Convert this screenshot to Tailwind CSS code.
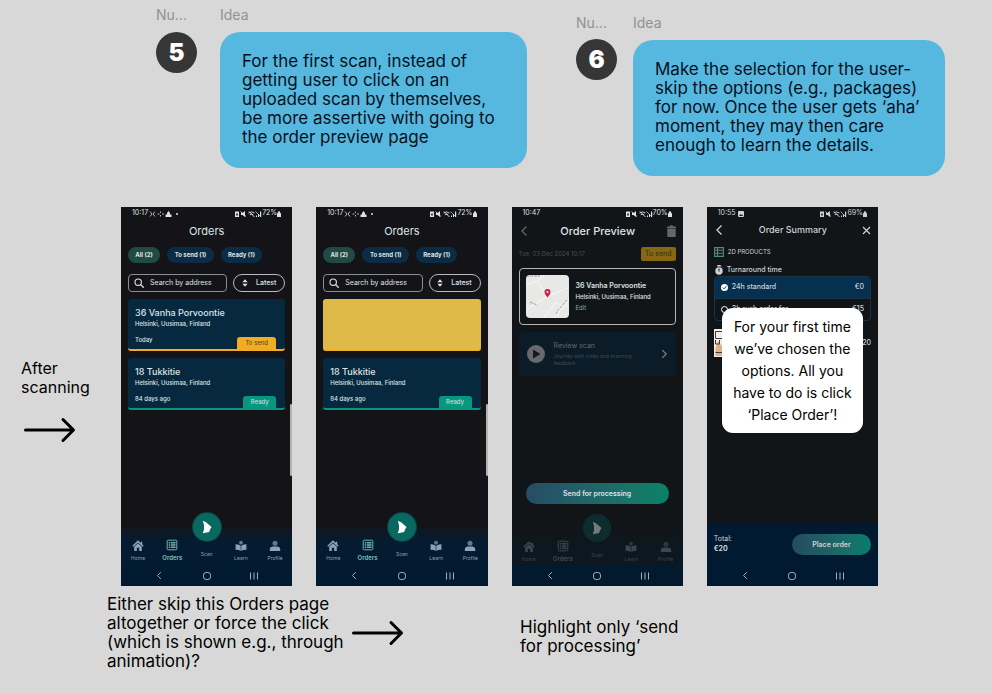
<!DOCTYPE html>
<html lang="en">
<head>
<meta charset="utf-8">
<title>Order flow ideas</title>
<meta name="viewport" content="width=device-width, initial-scale=1">
<script src="https://cdn.jsdelivr.net/npm/@tailwindcss/browser@4"></script>
</head>
<body class="min-h-screen bg-[#d8d8d8] font-['Inter','Liberation_Sans',sans-serif] text-black">

<!-- Shared icons -->
<svg class="hidden" aria-hidden="true">
  <symbol id="arrow" viewBox="0 0 52 26"><path d="M1.500 13H49M39 2.500L49.500 13L39 23.500" fill="none" stroke="currentColor" stroke-width="3" stroke-linecap="round" stroke-linejoin="round"/></symbol>
  <symbol id="st-left" viewBox="0 0 30 8"><path d="M1 1.500L3 4L1 6.500M6 1.500L4 4L6 6.500M8.500 4h2M13 4h2M11.500 1.500v1.500M11.500 5v1.500" fill="none" stroke="currentColor" stroke-width=".8"/><path d="M16.500 7V4.500H18V3L19.500 1L21 3v1.500h1.500V7z" fill="currentColor"/><circle cx="28" cy="4" r="1" fill="currentColor"/></symbol>
  <symbol id="st-right" viewBox="0 0 28 8"><path d="M1 1.500h4V7H1zM7 3h1.500L11 1v6L8.500 5H7z" fill="currentColor"/><path d="M2.200 3.500h1.600v2H2.200z" fill="#222"/><path d="M6.500 1.500L12 6.500M14.500 3q3-2.200 6 0M15.800 4.800q1.700-1.200 3.400 0M15 1.500L20.500 7" fill="none" stroke="currentColor" stroke-width=".9"/><path d="M22 7V5.500h1V7zM24 7V4h1v3zM26 7V1.500h1.200V7z" fill="currentColor"/><path d="M21.500 1.500L26 6" stroke="currentColor" stroke-width=".7"/></symbol>
  <symbol id="lock" viewBox="0 0 4 6"><path d="M0 2.300h4V6H0zM.8 2.500V1.500a1.200 1.200 0 0 1 2.400 0v1z" fill="currentColor"/></symbol>
  <symbol id="search" viewBox="0 0 10 10"><circle cx="4.200" cy="4.200" r="3.200" fill="none" stroke="currentColor" stroke-width="1.100"/><path d="M6.600 6.600L9.300 9.300" stroke="currentColor" stroke-width="1.300" stroke-linecap="round"/></symbol>
  <symbol id="sort" viewBox="0 0 6 8"><path d="M3 .3L5.600 3.300H.4zM3 7.700L5.600 4.700H.4z" fill="currentColor"/></symbol>
  <symbol id="home" viewBox="0 0 12 12"><path d="M.8 6.300L6 1.400L11.200 6.300M9.500 1.800v2.500" fill="none" stroke="currentColor" stroke-width="1.500"/><path d="M2.200 6.800L6 3.300L9.800 6.800V11H7.200V7.800H4.800V11H2.200z" fill="currentColor"/></symbol>
  <symbol id="orders" viewBox="0 0 12 12"><rect x="1.200" y="1.200" width="9.600" height="9.600" rx="1" fill="none" stroke="currentColor" stroke-width="1"/><path d="M2.800 3h1.500v1.500H2.800zM2.800 5.300h1.500v1.500H2.800zM2.800 7.600h1.500v1.500H2.800zM5 3h4.500v1.500H5zM5 5.300h4.500v1.500H5zM5 7.600h4.500v1.500H5z" fill="currentColor"/></symbol>
  <symbol id="learn" viewBox="0 0 12 12"><circle cx="6" cy="2.700" r="1.900" fill="currentColor" opacity=".7"/><path d="M.6 4.200Q4 4 5.700 5.800V11Q3.500 9.600.6 9.900zM11.400 4.200Q8 4 6.300 5.800V11Q8.500 9.600 11.400 9.900z" fill="currentColor"/></symbol>
  <symbol id="profile" viewBox="0 0 12 12"><circle cx="6" cy="3.200" r="2.500" fill="currentColor" opacity=".7"/><path d="M.8 11V9Q1 6.800 3.500 6.500H8.500Q11 6.800 11.200 9V11z" fill="currentColor"/></symbol>
  <symbol id="scan" viewBox="0 0 12 14"><path d="M1.800 .8L5 2.200L10.500 7L9 9.500L8.200 12L1.800 13.200L3 9.500V5z" fill="currentColor"/></symbol>
  <symbol id="back" viewBox="0 0 8 12"><path d="M6.500 1.500L2 6L6.500 10.500" fill="none" stroke="currentColor" stroke-width="1.300"/></symbol>
  <symbol id="circle" viewBox="0 0 10 10"><rect x="1.500" y="1.500" width="7" height="7" rx="2.600" fill="none" stroke="currentColor"/></symbol>
  <symbol id="bars" viewBox="0 0 10 10"><path d="M1.500 1.500v7M5 1.500v7M8.500 1.500v7" stroke="currentColor"/></symbol>
</svg>

<header class="flex items-start pl-[156px] pr-[47px]">
  <section class="flex flex-[371] gap-[23px] pt-[6px]">
    <div class="w-[41px] shrink-0">
      <p class="mb-[9px] text-[14px] leading-[17px] text-[#929292]">Nu...</p>
      <div class="grid size-[41px] place-items-center rounded-full bg-[#363636] text-[24px] leading-[24px] font-black text-white">5</div>
    </div>
    <div class="flex-1">
      <h2 class="mb-[9px] text-[14px] leading-[17px] text-[#929292]">Idea</h2>
      <p class="rounded-[20px] bg-[#56b8df] px-[22px] pt-[20px] pb-[21px] text-[17px] leading-[19px] text-[#03101c]">For the first scan, instead of<br>getting user to click on an<br>uploaded scan by themselves,<br>be more assertive with going to<br>the order preview page</p>
    </div>
  </section>
  <section class="ml-[49px] flex flex-[369] gap-[16px] pt-[14px]">
    <div class="w-[41px] shrink-0">
      <p class="mb-[8px] text-[14px] leading-[17px] text-[#929292]">Nu...</p>
      <div class="grid size-[41px] place-items-center rounded-full bg-[#363636] text-[24px] leading-[24px] font-black text-white">6</div>
    </div>
    <div class="flex-1">
      <h2 class="mb-[9px] text-[14px] leading-[17px] text-[#929292]">Idea</h2>
      <p class="rounded-[20px] bg-[#56b8df] px-[22px] pt-[20px] pb-[21px] text-[17px] leading-[19px] text-[#03101c]">Make the selection for the user-<br>skip the options (e.g., packages)<br>for now. Once the user gets ‘aha’<br>moment, they may then care<br>enough to learn the details.</p>
    </div>
  </section>
</header>

<main class="mt-[31px] flex pr-[114px]">
  <aside class="w-[121px] shrink-0 pt-[152px] pl-[21px]">
    <p class="text-[16px] leading-[19px]">After<br>scanning</p>
    <svg class="mt-[20px] ml-[3px] h-[26px] w-[52px]"><use href="#arrow"/></svg>
  </aside>

  <div class="grid flex-1 grid-cols-4 gap-6">

    <!-- Orders -->
    <article class="relative flex aspect-[171/378] flex-col bg-[#131318] text-[#dfe3e6]">
      <div class="flex h-[13px] items-center px-[11px] text-[7px]"><span>10:17</span><svg class="ml-[1px] h-[8px] w-[30px]"><use href="#st-left"/></svg><svg class="ml-auto h-[8px] w-[28px]"><use href="#st-right"/></svg><span>72%</span><svg class="h-[6px] w-[4px]"><use href="#lock"/></svg></div>
      <h3 class="mt-[4px] text-center text-[11px] leading-[14px]">Orders</h3>
      <div class="mt-[9px] flex gap-[7px] px-[7px] text-[6px] leading-[16px] font-bold">
        <button class="w-[32px] rounded-full bg-[#214a42]">All (2)</button><button class="w-[47px] rounded-full bg-[#0b2c45]">To send (1)</button><button class="w-[41px] rounded-full bg-[#0b2c45]">Ready (1)</button>
      </div>
      <div class="mt-[11px] flex gap-[6px] px-[7px]">
        <label class="flex h-[18px] min-w-0 flex-1 items-center gap-[6px] rounded-[4px] border border-[#8b8d91] px-[5px]"><svg class="size-[10px] shrink-0"><use href="#search"/></svg><input type="text" aria-label="Search by address" placeholder="Search by address" class="w-full min-w-0 bg-transparent text-[7px] leading-[10px] placeholder:text-[#dfe3e6]"></label>
        <button class="flex h-[18px] w-[52px] items-center justify-center gap-[8px] rounded-full border border-[#b9bbbd] text-[7px] font-medium"><svg class="h-[8px] w-[6px]"><use href="#sort"/></svg>Latest</button>
      </div>
      <div class="mx-[7px] mt-[7px] rounded-[3px] border-b-2 border-[#f0ad22] bg-[#06293f] pt-[8px] pl-[7px]">
        <h4 class="text-[9px] leading-[12px] font-medium">36 Vanha Porvoontie</h4>
        <p class="text-[6px] leading-[10px] font-medium">Helsinki, Uusimaa, Finland</p>
        <div class="mt-[8px] flex justify-between text-[6px] leading-[12px]"><span class="-mt-[3px] font-medium">Today</span><span class="mr-[9px] w-[39px] rounded-t-[3px] bg-[#f0ad22] text-center text-[#51401d]">To send</span></div>
      </div>
      <div class="mx-[7px] mt-[7px] rounded-[3px] border-b-2 border-[#07977e] bg-[#06293f] pt-[8px] pl-[7px]">
        <h4 class="text-[9px] leading-[12px] font-medium">18 Tukkitie</h4>
        <p class="text-[6px] leading-[10px] font-medium">Helsinki, Uusimaa, Finland</p>
        <div class="mt-[8px] flex justify-between text-[6px] leading-[12px]"><span class="-mt-[3px] font-medium">84 days ago</span><span class="mr-[9px] w-[33px] rounded-t-[3px] bg-[#07977e] text-center">Ready</span></div>
      </div>
      <div class="absolute top-[197px] right-0 h-[72px] w-[2px] rounded-full bg-[#b4b4b6]"></div>
      <nav class="relative mt-auto bg-linear-to-b from-[#101720] via-[#041b31] via-25% to-[#021a31] text-[#8ea3b5]">
        <button aria-label="Scan" class="absolute -top-[15px] left-1/2 grid size-[28px] -translate-x-1/2 place-items-center rounded-full bg-[#09685f] text-white ring-1 ring-[#0b4447]"><svg class="h-[14px] w-[12px]"><use href="#scan"/></svg></button>
        <div class="grid h-[38px] grid-cols-5 items-end pb-[4px] text-center text-[5px] leading-[8px]">
          <a href="#"><svg class="mx-auto mb-[2px] size-[12px]"><use href="#home"/></svg>Home</a><a href="#" class="font-bold text-[#72b4ab]"><svg class="mx-auto mb-[3px] size-[12px]"><use href="#orders"/></svg><span class="text-[6px]">Orders</span></a><a href="#" class="pb-[4px]">Scan</a><a href="#"><svg class="mx-auto mb-[2px] size-[12px]"><use href="#learn"/></svg>Learn</a><a href="#"><svg class="mx-auto mb-[2px] size-[12px]"><use href="#profile"/></svg>Profile</a>
        </div>
        <div class="flex h-[20px] items-center justify-between px-[33px] text-[#a4b0bb]"><svg class="h-[9px] w-[10px]"><use href="#back"/></svg><svg class="size-[10px]"><use href="#circle"/></svg><svg class="size-[10px]"><use href="#bars"/></svg></div>
      </nav>
    </article>

    <!-- Orders with the first scan highlighted -->
    <article class="relative flex aspect-[171/378] flex-col bg-[#131318] text-[#dfe3e6]">
      <div class="flex h-[13px] items-center px-[11px] text-[7px]"><span>10:17</span><svg class="ml-[1px] h-[8px] w-[30px]"><use href="#st-left"/></svg><svg class="ml-auto h-[8px] w-[28px]"><use href="#st-right"/></svg><span>72%</span><svg class="h-[6px] w-[4px]"><use href="#lock"/></svg></div>
      <h3 class="mt-[4px] text-center text-[11px] leading-[14px]">Orders</h3>
      <div class="mt-[9px] flex gap-[7px] px-[7px] text-[6px] leading-[16px] font-bold">
        <button class="w-[32px] rounded-full bg-[#214a42]">All (2)</button><button class="w-[47px] rounded-full bg-[#0b2c45]">To send (1)</button><button class="w-[41px] rounded-full bg-[#0b2c45]">Ready (1)</button>
      </div>
      <div class="mt-[11px] flex gap-[6px] px-[7px]">
        <label class="flex h-[18px] min-w-0 flex-1 items-center gap-[6px] rounded-[4px] border border-[#8b8d91] px-[5px]"><svg class="size-[10px] shrink-0"><use href="#search"/></svg><input type="text" aria-label="Search by address" placeholder="Search by address" class="w-full min-w-0 bg-transparent text-[7px] leading-[10px] placeholder:text-[#dfe3e6]"></label>
        <button class="flex h-[18px] w-[52px] items-center justify-center gap-[8px] rounded-full border border-[#b9bbbd] text-[7px] font-medium"><svg class="h-[8px] w-[6px]"><use href="#sort"/></svg>Latest</button>
      </div>
      <div class="mx-[7px] mt-[7px] h-[52px] rounded-[3px] border-b border-[#eeb128] bg-[#e0ba49]"></div>
      <div class="mx-[7px] mt-[7px] rounded-[3px] border-b-2 border-[#07977e] bg-[#06293f] pt-[8px] pl-[7px]">
        <h4 class="text-[9px] leading-[12px] font-medium">18 Tukkitie</h4>
        <p class="text-[6px] leading-[10px] font-medium">Helsinki, Uusimaa, Finland</p>
        <div class="mt-[8px] flex justify-between text-[6px] leading-[12px]"><span class="-mt-[3px] font-medium">84 days ago</span><span class="mr-[9px] w-[33px] rounded-t-[3px] bg-[#07977e] text-center">Ready</span></div>
      </div>
      <div class="absolute top-[197px] right-0 h-[72px] w-[2px] rounded-full bg-[#b4b4b6]"></div>
      <nav class="relative mt-auto bg-linear-to-b from-[#101720] via-[#041b31] via-25% to-[#021a31] text-[#8ea3b5]">
        <button aria-label="Scan" class="absolute -top-[15px] left-1/2 grid size-[28px] -translate-x-1/2 place-items-center rounded-full bg-[#09685f] text-white ring-1 ring-[#0b4447]"><svg class="h-[14px] w-[12px]"><use href="#scan"/></svg></button>
        <div class="grid h-[38px] grid-cols-5 items-end pb-[4px] text-center text-[5px] leading-[8px]">
          <a href="#"><svg class="mx-auto mb-[2px] size-[12px]"><use href="#home"/></svg>Home</a><a href="#" class="font-bold text-[#72b4ab]"><svg class="mx-auto mb-[3px] size-[12px]"><use href="#orders"/></svg><span class="text-[6px]">Orders</span></a><a href="#" class="pb-[4px]">Scan</a><a href="#"><svg class="mx-auto mb-[2px] size-[12px]"><use href="#learn"/></svg>Learn</a><a href="#"><svg class="mx-auto mb-[2px] size-[12px]"><use href="#profile"/></svg>Profile</a>
        </div>
        <div class="flex h-[20px] items-center justify-between px-[33px] text-[#a4b0bb]"><svg class="h-[9px] w-[10px]"><use href="#back"/></svg><svg class="size-[10px]"><use href="#circle"/></svg><svg class="size-[10px]"><use href="#bars"/></svg></div>
      </nav>
    </article>

    <!-- Order preview -->
    <article class="flex aspect-[171/378] flex-col bg-[#111518] text-[#dfe3e6]">
      <div class="flex h-[13px] items-center px-[11px] text-[7px]"><span>10:47</span><svg class="ml-auto h-[8px] w-[28px]"><use href="#st-right"/></svg><span>70%</span><svg class="h-[6px] w-[4px]"><use href="#lock"/></svg></div>
      <div class="mt-[4px] flex items-center justify-between px-[7px]">
        <button aria-label="Back" class="text-[#62666a]"><svg class="h-[12px] w-[10px]"><use href="#back"/></svg></button>
        <h3 class="text-[11px] leading-[14px] font-medium">Order Preview</h3>
        <button aria-label="Delete" class="text-[#65686a]"><svg class="h-[12px] w-[9px]" viewBox="0 0 9 12"><path d="M0 1.500h2.500L3.500.3h2l1 1.200H9V3H0zM.3 3.400h8.400V11q0 1-1 1H1.300q-1 0-1-1z" fill="currentColor"/></svg></button>
      </div>
      <div class="mt-[9px] flex items-center justify-between px-[7px] text-[6px] leading-[14px]"><span class="text-[#4b4f52]">Tue, 03 Dec 2024 10:17</span><span class="w-[35px] rounded-[2px] bg-[#886713] text-center text-[7px] text-[#302d20]">To send</span></div>
      <div class="mx-[7px] mt-[7px] flex gap-[7px] rounded-[4px] border border-[#b5b8ba] p-[6px]">
        <svg class="size-[43px] shrink-0 rounded-[4px] bg-[#e8e8e6]" viewBox="0 0 43 43"><path d="M0 10L12 6L18 0M12 6L20 22L0 35M20 22L43 12M28 43L43 25M18 43L29 28L43 32" fill="none" stroke="#f1f1ef" stroke-width="1.500"/><path d="M0 1h14M4 27l7 3M30 39l3-5M34 33l7-8" fill="none" stroke="#8b8e90" stroke-width=".8" stroke-dasharray="3 1"/><path d="M21.500 22.500q-3-3.500-3-5.500a3 3 0 0 1 6 0q0 2-3 5.500z" fill="#d41e45"/><circle cx="21.500" cy="17" r="1" fill="#fff"/></svg>
        <div class="pt-[5px] text-[6px] leading-[11px]"><h4 class="text-[7px] leading-[11px] font-semibold">36 Vanha Porvoontie</h4><p class="font-medium">Helsinki, Uusimaa, Finland</p><a href="#" class="block text-[#87a89e]">Edit</a></div>
      </div>
      <div class="mx-[7px] mt-[7px] flex h-[44px] items-center gap-[9px] rounded-[3px] bg-[#0b1c28] px-[8px]">
        <svg class="size-[18px] shrink-0" viewBox="0 0 18 18"><circle cx="9" cy="9" r="9" fill="#66696d"/><path d="M6 4.500L13.500 9L6 13.500z" fill="#15191d"/></svg>
        <div class="min-w-0 flex-1 text-[5px] leading-[7px] text-[#3d4a53]"><h4 class="mb-[3px] text-[7px] leading-[9px] text-[#5f6970]">Review scan</h4><p class="whitespace-nowrap">Journey with video and scanning<br>feedback</p></div>
        <svg class="h-[12px] w-[7px] rotate-180 text-[#7e868b]"><use href="#back"/></svg>
      </div>
      <button class="mx-[14px] mt-auto mb-[25px] rounded-full bg-linear-to-r from-[#264c65] to-[#078268] text-[7px] leading-[21px] font-semibold">Send for processing</button>
      <nav class="relative bg-linear-to-b from-[#10161a] to-[#06182a] text-[#3d464e]">
        <button aria-label="Scan" class="absolute -top-[15px] left-1/2 grid size-[28px] -translate-x-1/2 place-items-center rounded-full bg-[#0c2c2d] text-[#74797b]"><svg class="h-[14px] w-[12px]"><use href="#scan"/></svg></button>
        <div class="grid h-[37px] grid-cols-5 items-end pb-[3px] text-center text-[5px] leading-[8px]">
          <a href="#"><svg class="mx-auto mb-[2px] size-[12px]"><use href="#home"/></svg>Home</a><a href="#" class="font-bold"><svg class="mx-auto mb-[3px] size-[12px]"><use href="#orders"/></svg><span class="text-[6px]">Orders</span></a><a href="#" class="pb-[4px]">Scan</a><a href="#"><svg class="mx-auto mb-[2px] size-[12px]"><use href="#learn"/></svg>Learn</a><a href="#"><svg class="mx-auto mb-[2px] size-[12px]"><use href="#profile"/></svg>Profile</a>
        </div>
        <div class="flex h-[20px] items-center justify-between bg-[#02192e] px-[33px] text-[#a4b0bb]"><svg class="h-[9px] w-[10px]"><use href="#back"/></svg><svg class="size-[10px]"><use href="#circle"/></svg><svg class="size-[10px]"><use href="#bars"/></svg></div>
      </nav>
    </article>

    <!-- Order summary -->
    <article class="relative flex aspect-[171/378] flex-col bg-[#111518] text-[#cfd3d6]">
      <div class="flex h-[13px] items-center px-[11px] text-[7px]"><span>10:55</span><svg class="ml-[2px] size-[6px]" viewBox="0 0 6 6"><rect width="6" height="6" rx="1" fill="currentColor"/><path d="M1 5L2.500 3L3.500 4L4.300 3.300L5 5z" fill="#222"/></svg><svg class="ml-auto h-[8px] w-[28px]"><use href="#st-right"/></svg><span>69%</span><svg class="h-[6px] w-[4px]"><use href="#lock"/></svg></div>
      <div class="mt-[3px] flex items-center justify-between px-[7px]">
        <button aria-label="Back"><svg class="h-[12px] w-[10px]"><use href="#back"/></svg></button>
        <h3 class="text-[9px] leading-[14px] font-medium">Order Summary</h3>
        <button aria-label="Close"><svg class="size-[9px]" viewBox="0 0 9 9"><path d="M1 1L8 8M8 1L1 8" stroke="currentColor" stroke-width="1.200"/></svg></button>
      </div>
      <p class="mt-[10px] flex items-center gap-[4px] px-[7px] text-[6px] leading-[10px]"><svg class="size-[10px] text-[#56877b]" viewBox="0 0 10 10"><path d="M.6.6h8.800v8.800H.6zM.6 3.300h8.800M.6 6.200h8.800M3.500.6v8.800" fill="none" stroke="currentColor" stroke-width="1.100"/></svg>2D PRODUCTS</p>
      <p class="mt-[8px] flex items-center gap-[4px] px-[8px] text-[7px] leading-[10px] font-medium"><svg class="h-[10px] w-[8px]" viewBox="0 0 8 10"><circle cx="4" cy="6" r="3.700" fill="currentColor"/><path d="M2.500 0h3v1.300h-3zM6.500 1.500l1 1" fill="currentColor" stroke="currentColor" stroke-width=".5"/><path d="M4 3.500V6.500" stroke="#15191d"/></svg>Turnaround time</p>
      <fieldset class="mx-[7px] mt-[1px] overflow-hidden rounded-[4px] border border-[#18344a] text-[7px] font-medium">
        <label class="flex h-[22px] items-center gap-[4px] border-b border-[#18344a] bg-[#06304f] px-[6px]"><span class="relative grid size-[7px] place-items-center"><input type="radio" name="time" checked class="size-[7px] appearance-none rounded-full bg-white"><svg class="pointer-events-none absolute size-[7px]" viewBox="0 0 7 7"><path d="M1.800 3.600L3 4.800L5.300 2.300" fill="none" stroke="#06304f"/></svg></span><span class="flex-1">24h standard</span><span>€0</span></label>
        <label class="flex h-[21px] items-center gap-[4px] px-[6px]"><input type="radio" name="time" class="size-[7px] appearance-none rounded-full border border-white"><span class="flex-1">3h rush order for</span><span>€15</span></label>
      </fieldset>
      <div class="mt-[8px] flex items-center justify-between px-[7px] text-[7px] font-medium"><svg class="h-[28px] w-[25px]" viewBox="0 0 25 28"><rect width="25" height="28" fill="#f1ece7"/><path d="M4 12L8 17V27H1.500V19z" fill="#dfb08b"/><path d="M1.500 2.500h7v7h-7zM1.500 11v4h4V11M1.500 23.500h7" fill="none" stroke="#403b38"/></svg><span>€20</span></div>
      <p class="absolute top-[101px] right-[15px] left-[15px] rounded-[11px] bg-white pt-[8px] pb-[7px] text-center text-[14px] leading-[22px] text-black">For your first time<br>we’ve chosen the<br>options. All you<br>have to do is click<br>‘Place Order’!</p>
      <footer class="mt-auto bg-[#021a31]">
        <div class="flex h-[43px] items-center justify-between px-[7px] text-[7px] leading-[10px]"><p>Total:<br><strong>€20</strong></p><button class="w-[79px] rounded-full bg-linear-to-r from-[#244b60] to-[#087d6b] leading-[21px] font-semibold">Place order</button></div>
        <div class="flex h-[20px] items-center justify-between px-[33px] text-[#a4b0bb]"><svg class="h-[9px] w-[10px]"><use href="#back"/></svg><svg class="size-[10px]"><use href="#circle"/></svg><svg class="size-[10px]"><use href="#bars"/></svg></div>
      </footer>
    </article>
  </div>
</main>

<footer class="mt-[9px] flex items-start pl-[107px] text-[17px] leading-[19px]">
  <p class="w-[245px]">Either skip this Orders page<br>altogether or force the click<br>(which is shown e.g., through<br>animation)?</p>
  <svg class="mt-[25px] h-[26px] w-[52px]"><use href="#arrow"/></svg>
  <p class="mt-[23px] ml-[116px]">Highlight only ‘send<br>for processing’</p>
</footer>
</body>
</html>
